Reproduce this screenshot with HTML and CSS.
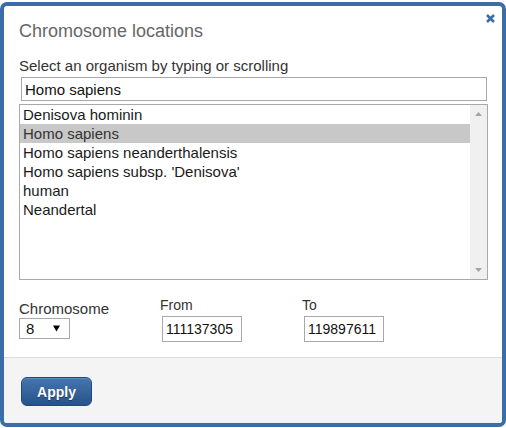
FILE: index.html
```html
<!DOCTYPE html>
<html>
<head>
<meta charset="utf-8">
<link rel="stylesheet" href="styles.css">
</head>
<body>
<div class="dialog">
  <button class="close" aria-label="Close">
    <svg width="9" height="9" viewBox="0 0 9 9"><path d="M1 1 L8 8 M8 1 L1 8" stroke="#3b6ea6" stroke-width="2.6" stroke-linecap="butt"/></svg>
  </button>
  <div class="content">
    <h2 class="title">Chromosome locations</h2>
    <div class="label">Select an organism by typing or scrolling</div>
    <div class="search">Homo sapiens</div>
    <div class="listbox">
      <ul class="options">
        <li>Denisova hominin</li>
        <li class="selected">Homo sapiens</li>
        <li>Homo sapiens neanderthalensis</li>
        <li>Homo sapiens subsp. 'Denisova'</li>
        <li>human</li>
        <li>Neandertal</li>
      </ul>
      <div class="scrollbar">
        <svg class="arrow" width="7" height="4" viewBox="0 0 7 4"><path d="M0 4 L3.5 0 L7 4 Z" fill="#a3a3a3"/></svg>
        <svg class="arrow" width="7" height="4" viewBox="0 0 7 4"><path d="M0 0 L7 0 L3.5 4 Z" fill="#a3a3a3"/></svg>
      </div>
    </div>
    <div class="fields">
      <div class="field chrom">
        <div class="flabel">Chromosome</div>
        <div class="select"><span>8</span><svg class="caret" width="7" height="7" viewBox="0 0 7 7"><path d="M0 0.5 L7 0.5 L3.5 6.5 Z" fill="#000"/></svg></div>
      </div>
      <div class="field pos">
        <div class="flabel">From</div>
        <div class="num">111137305</div>
      </div>
      <div class="field pos">
        <div class="flabel">To</div>
        <div class="num">119897611</div>
      </div>
    </div>
  </div>
  <div class="footer">
    <button class="apply">Apply</button>
  </div>
</div>
</body>
</html>
```
FILE: styles.css
```css
* { box-sizing: border-box; }
html, body { margin: 0; padding: 0; background: #fff; }
body {
  font-family: "Liberation Sans", Arial, sans-serif;
  font-size: 15px;
  color: #222;
  width: 506px;
  height: 428px;
  overflow: hidden;
}
.dialog {
  position: relative;
  margin-top: 2px;
  width: 506px;
  height: 425px;
  border: 4px solid #3b6ea6;
  border-radius: 7px;
  background: #fff;
  display: flex;
  flex-direction: column;
  overflow: hidden;
}
.close {
  position: absolute;
  top: 8px;
  right: 7px;
  width: 9px;
  height: 9px;
  padding: 0;
  border: 0;
  background: none;
  display: flex;
}
.content {
  flex: 1;
  padding: 0 15px;
}
.title {
  margin: 14px 0 0 0;
  font-size: 18px;
  line-height: 22px;
  font-weight: normal;
  color: #666;
}
.label {
  margin-top: 15px;
  line-height: 18px;
  color: #333;
}
.search {
  margin: 2px 0 0 2px;
  width: 466px;
  height: 24px;
  border: 1px solid #a9a9a9;
  padding: 2px 0 0 3px;
  line-height: 20px;
  color: #111;
}
.listbox {
  margin-top: 3px;
  width: 469px;
  height: 176px;
  border: 1px solid #a9a9a9;
  display: flex;
}
.options {
  list-style: none;
  margin: 0;
  padding: 0;
  flex: 1;
}
.options li {
  height: 19px;
  line-height: 19px;
  padding-left: 3px;
  color: #1a1a1a;
}
.options li.selected {
  background: #c8c8c8;
  color: #333;
}
.scrollbar {
  width: 17px;
  background: #f0f0f0;
  display: flex;
  flex-direction: column;
  justify-content: space-between;
  align-items: center;
  padding: 7px 0 7px 0;
}
.fields {
  display: flex;
}
.field.chrom {
  width: 141px;
  margin-top: 20px;
}
.field.pos {
  width: 142px;
  margin-top: 16px;
  font-size: 14px;
}
.flabel {
  line-height: 18px;
  color: #333;
}
.select {
  width: 51px;
  height: 21px;
  border: 1px solid #a9a9a9;
  display: flex;
  align-items: center;
  padding-left: 6px;
  line-height: 18px;
  color: #111;
}
.caret {
  margin-left: 19px;
}
.num {
  margin: 2px 0 0 2px;
  width: 80px;
  height: 26px;
  border: 1px solid #a9a9a9;
  padding: 0 0 0 3px;
  line-height: 24px;
  color: #111;
}
.footer {
  height: 66px;
  border-top: 1px solid #dcdcdc;
  background: #f4f4f4;
  padding: 19px 0 0 17px;
}
.apply {
  width: 71px;
  height: 29px;
  border: 1px solid #1f4a7b;
  border-radius: 6px;
  background: linear-gradient(#4576ae, #27528a);
  color: #fff;
  font-family: "Liberation Sans", Arial, sans-serif;
  font-size: 14px;
  font-weight: bold;
  text-shadow: 0 1px 1px rgba(0,0,0,0.35);
  padding: 0;
  box-shadow: inset 0 1px 0 rgba(255,255,255,0.15);
}
```
